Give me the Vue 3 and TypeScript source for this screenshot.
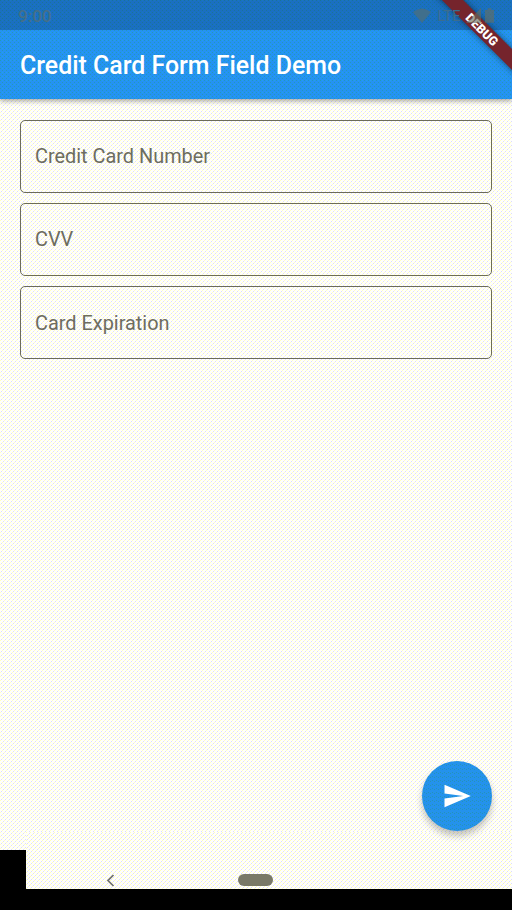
<script setup lang="ts">
import { ref } from 'vue'

interface Field {
  id: string
  label: string
}

const title = ref<string>('Credit Card Form Field Demo')
const fields: Field[] = [
  { id: 'number', label: 'Credit Card Number' },
  { id: 'cvv', label: 'CVV' },
  { id: 'expiration', label: 'Card Expiration' },
]
</script>

<template>
  <div class="screen">
    <header class="top">
      <div class="status">
        <span class="clock">9:00</span>
        <div class="indicators">
          <svg class="wifi" width="18" height="15" viewBox="0 0 18 15"><path d="M0 4Q9-3 18 4L9 15Z" /></svg>
          <span class="lte">LTE</span>
          <svg class="signal" width="15" height="15" viewBox="0 0 15 15"><path d="M15 0V15H0Z" /></svg>
          <svg class="battery" width="9" height="15" viewBox="0 0 10 16"><path d="M3 0H7V2H10V16H0V2H3Z" /></svg>
        </div>
      </div>
      <div class="appbar"><h1>{{ title }}</h1></div>
      <div class="ribbon-clip"><div class="ribbon">DEBUG</div></div>
    </header>

    <main class="content">
      <form class="fields">
        <div v-for="field in fields" :key="field.id" class="field">{{ field.label }}</div>
      </form>
      <button class="send" type="button">
        <svg width="30" height="30" viewBox="0 0 24 24"><path d="M2.01 21L23 12 2.01 3 2 10l15 2-15 2z" /></svg>
      </button>
    </main>

    <nav class="navigation">
      <div class="navbar">
        <svg class="back" width="9" height="13" viewBox="0 0 9 13"><path d="M7.5 1L2 6.5L7.5 12" /></svg>
        <span class="home"></span>
      </div>
    </nav>
  </div>
</template>

<style>
body {
  background: #000;
}
</style>

<style scoped>
.screen {
  display: flex;
  flex-direction: column;
  width: 512px;
  height: 910px;
  overflow: hidden;
  background: #000;
  font-family: Roboto, sans-serif;
}
.top {
  position: relative;
  z-index: 1;
  flex: none;
  height: 99px;
  background:
    conic-gradient(from 270deg at 1px 1px, #2499b8 90deg, transparent 0) 0 0 / 4px 4px,
    conic-gradient(from 270deg at 1px 1px, #2499b8 90deg, transparent 0) 2px 2px / 4px 4px,
    conic-gradient(from 270deg at 1px 1px, #249ff0 90deg, transparent 0) 2px 0 / 4px 4px,
    #2492f3;
  box-shadow: 0 2px 5px rgba(0, 0, 0, 0.35);
}
.status {
  display: flex;
  justify-content: space-between;
  align-items: center;
  box-sizing: border-box;
  height: 30px;
  padding: 1px 18px 0;
  background: rgba(0, 20, 70, 0.28);
  color: #456f88;
  font-size: 17px;
  font-weight: 500;
}
.clock {
  line-height: 20px;
}
.indicators {
  position: relative;
  z-index: 2;
  display: flex;
  align-items: center;
  gap: 4px;
}
.indicators svg {
  fill: rgba(103, 110, 95, 0.62);
}
.indicators .wifi {
  margin-right: 2px;
  fill: #406f8c;
}
.lte {
  width: 25px;
  color: #3c6d8e;
  font-size: 15px;
  font-weight: 400;
}
.appbar {
  display: flex;
  align-items: center;
  height: 69px;
  padding: 0 20px;
}
h1 {
  margin: 2px 0 0;
  color: #fff;
  font-size: 24.9px;
  font-weight: 500;
  line-height: 30px;
  white-space: nowrap;
}
.ribbon-clip {
  position: absolute;
  top: 0;
  right: 0;
  width: 80px;
  height: 80px;
  overflow: hidden;
}
.ribbon {
  position: absolute;
  top: 22px;
  left: -15px;
  box-sizing: border-box;
  width: 130px;
  height: 15px;
  transform: rotate(45deg);
  background: #75242c;
  box-shadow: 0 0 6px rgba(0, 0, 0, 0.5);
  color: #fff;
  font-size: 12.5px;
  font-weight: 900;
  line-height: 15px;
  text-align: center;
}
.content {
  position: relative;
  flex: none;
  box-sizing: border-box;
  height: 751px;
  padding: 20.6px 20px 20px;
  background:
    conic-gradient(from 270deg at 1px 1px, #ffffc4 90deg, transparent 0) 0 1px / 4px 4px,
    conic-gradient(from 270deg at 1px 1px, #ffffc4 90deg, transparent 0) 2px 3px / 4px 4px,
    conic-gradient(from 270deg at 1px 1px, #dbdbff 90deg, transparent 0) 3px 2px / 4px 4px,
    conic-gradient(from 270deg at 1px 1px, #dbdbff 90deg, transparent 0) 1px 0 / 4px 4px,
    #fffffa;
}
.fields {
  display: flex;
  flex-direction: column;
  gap: 10.4px;
}
.field {
  display: flex;
  align-items: center;
  box-sizing: border-box;
  height: 73px;
  padding: 1px 14px 0;
  border: 1px solid #6c6c58;
  border-radius: 5px;
  color: #6d6d60;
  font-size: 19.9px;
}
.send {
  position: absolute;
  z-index: 2;
  right: 20px;
  bottom: 19px;
  display: grid;
  place-items: center;
  width: 70px;
  height: 70px;
  padding: 0;
  border: 0;
  border-radius: 50%;
  background:
    conic-gradient(from 270deg at 1px 1px, #2494b8 90deg, transparent 0) 0 0 / 4px 4px,
    conic-gradient(from 270deg at 1px 1px, #2494b8 90deg, transparent 0) 2px 3px / 4px 4px,
    #2492ec;
  box-shadow: 0 5px 7px rgba(0, 0, 0, 0.24);
}
.send path {
  fill: #fff;
}
.navigation {
  flex: none;
  padding-left: 26px;
}
.navbar {
  display: flex;
  align-items: flex-start;
  box-sizing: border-box;
  height: 57px;
  margin-top: -18px;
  padding: 42px 0 0 80px;
  position: relative;
  background:
    conic-gradient(from 270deg at 1px 1px, #ffffb8 90deg, transparent 0) 0 0 / 4px 4px,
    conic-gradient(from 270deg at 1px 1px, #ffffb8 90deg, transparent 0) 2px 2px / 4px 4px,
    conic-gradient(from 270deg at 1px 1px, #dbdbff 90deg, transparent 0) 3px 1px / 4px 4px,
    conic-gradient(from 270deg at 1px 1px, #dbdbff 90deg, transparent 0) 1px 3px / 4px 4px,
    #fffffa;
}
.back {
  fill: none;
  stroke: #707070;
  stroke-width: 1.7;
}
.home {
  width: 35px;
  height: 12px;
  margin-left: 123px;
  border-radius: 6px;
  background: #797967;
}
</style>
